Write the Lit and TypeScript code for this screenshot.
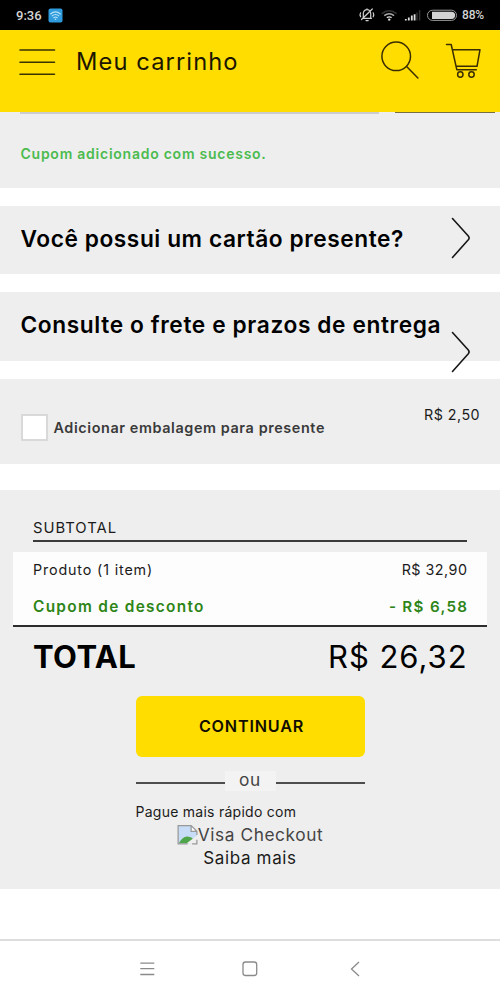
import { LitElement, html, css } from "lit";
import { customElement } from "lit/decorators.js";

const chevron = html`<svg class="chevron" width="22" height="42" viewBox="0 0 22 42" fill="none" stroke="#161616" stroke-width="1.6" stroke-linecap="round" stroke-linejoin="round"><path d="M2.5 1.5 18.300 19q1.600 1.900 0 3.800L2.500 40.500"/></svg>`;

@customElement("status-bar")
class StatusBar extends LitElement {
  static styles = css`
    :host { display: flex; align-items: center; flex: none; height: 30px; background: #000; color: #d4d4d4; font: 500 12px/30px Roboto, sans-serif; padding: 0 16px; }
    .time { font-size: 13px; padding-top: 1px; width: 32px; }
    .grow { flex: 1; }
    .pct { letter-spacing: -0.2px; }
    svg { display: block; flex: none; }
  `;
  render() {
    return html`
      <span class="time">9:36</span>
      <svg width="15" height="15" viewBox="0 0 15 15"><rect x=".5" y=".5" width="14" height="14" rx="2" fill="#2f9bdc"/><g fill="none" stroke="#b9e4fa" stroke-width="1.1" stroke-linecap="round"><path d="M2.6 6Q7.5 1.8 12.4 6M4.2 7.9q3.3-2.8 6.6 0M5.8 9.7q1.700-1.300 3.400 0"/></g><circle cx="7.5" cy="11.2" r=".8" fill="#b9e4fa"/></svg>
      <span class="grow"></span>
      <svg width="104" height="30" viewBox="358 0 104 30" fill="none">
        <g stroke="#cfcfcf" stroke-width="1.2" stroke-linecap="round"><path d="M362.5 18.300h9M363.300 18v-4.500a3.700 3.900 0 0 1 7.400 0V18M361.500 19.500 372.300 9M366 20.600h2.200M360.600 12.800q-1.100 1.800 0 4M373.200 12.800q1.100 1.800 0 4M367 9.300V8.800"/></g>
        <path d="M381.800 13.600q7.400-5.600 14.800 0" stroke="#333" stroke-width="1.6"/><path d="M384.300 15.600q4.900-3.700 9.800 0" stroke="#aaa" stroke-width="1.5"/><path d="M386.800 17.700q2.400-1.600 4.800 0" stroke="#ddd" stroke-width="1.4"/><circle cx="389.200" cy="19.600" r="1.2" fill="#ddd"/>
        <path d="M405.800 20.500v-1.500M408.800 20.500v-3M411.800 20.500v-5M414.600 20.500v-6.200" stroke="#ddd" stroke-width="1.8"/><path d="M417 20.500v-8M419.600 20.500V10" stroke="#333" stroke-width="1.4"/>
        <rect x="427.500" y="10.200" width="29" height="10.200" rx="5" stroke="#999"/><path d="M432 11.700h19.500a3.600 3.600 0 0 1 0 7.200H432z" fill="#d2d2d2"/>
      </svg>
      <span class="pct">88%</span>`;
  }
}

@customElement("app-root")
class AppRoot extends LitElement {
  static styles = css`
    :host { display: flex; flex-direction: column; height: 1000px; background: #fff; font-family: Inter, sans-serif; color: #1b1b1b; overflow: hidden; }
    svg { display: block; flex: none; }
    .top { display: flex; height: 82px; flex: none; background: #ffdd00; box-sizing: border-box; padding: 10px 19px 0; align-items: flex-start; }
    .title { flex: 1; font-size: 23.7px; line-height: 44px; padding-left: 20px; color: #1c1600; letter-spacing: 1.1px; }
    .search { margin-right: 26px; }
    .edge { display: flex; height: 2px; flex: none; padding-left: 20px; background: #eee; }
    .edge .field { width: 359px; background: #ccc; margin-right: 16px; }
    .edge .apply { width: 100px; background: #766d45; height: 1px; }
    .band { background: #eee; box-sizing: border-box; padding: 0 20.5px; flex: none; display: flex; }
    .coupon { height: 74px; font-size: 14px; font-weight: 600; color: #4bbb4f; line-height: 80px; letter-spacing: 0.75px; }
    .link { height: 68px; margin-top: 18px; font-size: 22.7px; font-weight: 600; color: #000; line-height: 65px; justify-content: space-between; padding-right: 28.5px; letter-spacing: 0.57px; }
    .link .chevron { margin-top: 10.5px; }
    .link.low { height: 69px; letter-spacing: 0.62px; }
    .link.low .chevron { margin-top: 39px; }
    .gift { height: 85px; margin-top: 18px; justify-content: space-between; }
    .check { display: flex; align-items: center; gap: 6px; font-size: 14.4px; font-weight: 600; color: #3a3a3a; padding-top: 12px; letter-spacing: 0.6px; }
    .box { width: 27px; height: 27px; box-sizing: border-box; border: 2px solid #d9d9d9; background: #fff; }
    .fee { font-size: 14.3px; line-height: 71px; letter-spacing: 0.45px; margin-right: -0.5px; }
    .summary { height: 399px; margin-top: 26px; padding: 0 13px; flex-direction: column; align-items: stretch; }
    .row { display: flex; justify-content: space-between; padding: 0 20px; font-size: 14.3px; }
    .row .amount { letter-spacing: 0.5px; margin-right: -0.5px; }
    .sub { font-size: 14.8px; line-height: 20px; letter-spacing: 0.97px; margin: 28px 20px 0; padding: 0 0 2px; border-bottom: 2px solid #3a3a3a; }
    .items { background: #fdfdfd; margin-top: 10px; height: 75px; border-bottom: 2px solid #2c2c2c; box-sizing: border-box; }
    .items .row { line-height: 36px; letter-spacing: 0.86px; }
    .items .off { font-size: 15.4px; line-height: 37px; letter-spacing: 1.3px; font-weight: 600; color: #2e8517; }
    .off .amount { font-size: 15.2px; letter-spacing: 1.3px; margin-right: -1.3px; }
    .total { font-size: 31px; line-height: 60px; color: #000; }
    .total b { font-weight: 700; letter-spacing: 0.4px; }
    .total .amount { letter-spacing: 0.96px; margin-right: -0.5px; }
    .pay { width: 229px; align-self: center; display: flex; flex-direction: column; align-items: center; }
    .go { width: 229px; height: 61px; border: 0; border-radius: 6px; background: #ffdd00; font: 600 16.2px/58px Inter, sans-serif; letter-spacing: 0.8px; color: #110d00; padding: 0 0 2px 3px; margin: 9px 0 0; }
    .or { display: flex; align-self: stretch; align-items: center; margin-top: 14px; font-size: 17.3px; color: #444; }
    .or i { flex: 1; height: 2px; background: #4d4d4d; margin-top: 4px; }
    .or span { width: 51px; text-align: center; background: #f3f3f3; line-height: 18px; height: 20px; letter-spacing: 0.6px; }
    .fast { align-self: flex-start; font-size: 14px; line-height: 22px; margin-top: 10px; letter-spacing: 0.26px; }
    .visa { display: flex; font-size: 17.3px; line-height: 23px; color: #444; letter-spacing: 0.58px; }
    .more { font-size: 17px; line-height: 24px; letter-spacing: 0.65px; }
    .nav { margin-top: auto; height: 59px; border-top: 2px solid #dedede; flex: none; display: flex; justify-content: center; }
  `;
  render() {
    return html`
      <status-bar></status-bar>
      <header class="top">
        <svg width="37" height="44" viewBox="0 0 37 44" stroke="#3a3300" stroke-width="1.6" stroke-linecap="round"><path d="M1 10h34.500M1 22.300h34.500M1 34.300h34.500"/></svg>
        <span class="title">Meu carrinho</span>
        <svg class="search" width="39" height="40" viewBox="0 0 39 40" fill="none" stroke="#3a2d00" stroke-width="1.500" stroke-linecap="round"><circle cx="16.200" cy="16.300" r="14.300"/><path d="M26.600 26.500 37.900 38"/></svg>
        <svg width="36" height="40" viewBox="445 40 36 40" fill="none" stroke="#3a2d00" stroke-width="1.500" stroke-linecap="round" stroke-linejoin="round"><path d="M446.500 44.500h4.700l5.600 25.200h19.500M452.500 49.700h27.500l-3 16.600h-20.700"/><circle cx="460.300" cy="74.500" r="2.700"/><circle cx="471.500" cy="74.500" r="2.700"/></svg>
      </header>
      <div class="edge"><span class="field"></span><span class="apply"></span></div>
      <section class="band coupon">Cupom adicionado com sucesso.</section>
      <section class="band link"><span>Você possui um cartão presente?</span>${chevron}</section>
      <section class="band link low"><span>Consulte o frete e prazos de entrega</span>${chevron}</section>
      <section class="band gift">
        <label class="check"><span class="box"></span>Adicionar embalagem para presente</label>
        <span class="fee">R$ 2,50</span>
      </section>
      <section class="band summary">
        <div class="sub">SUBTOTAL</div>
        <div class="items">
          <div class="row"><span>Produto (1 item)</span><span class="amount">R$ 32,90</span></div>
          <div class="row off"><span>Cupom de desconto</span><span class="amount">- R$ 6,58</span></div>
        </div>
        <div class="row total"><b>TOTAL</b><span class="amount">R$ 26,32</span></div>
        <div class="pay">
          <button class="go">CONTINUAR</button>
          <div class="or"><i></i><span>ou</span><i></i></div>
          <span class="fast">Pague mais rápido com</span>
          <div class="visa">
            <svg width="21" height="23" viewBox="0 0 21 24"><path d="M.7 2.700h13.600l6 6v13H.7z" fill="#c7dcf6"/><path d="M1.500 21q3-6 8-7 5 0 7 3l-5 4z" fill="#4fa64a"/><path d="M20.300 13v8.700H9z" fill="#eee"/><path d="M14.300 2.700v6h6z" fill="#fff"/><path d="M20.300 12.500V8.700l-6-6H.7v19h10M14.300 2.700v6h6M20.300 17.500v4.200h-5" fill="none" stroke="#999" stroke-width="1.300"/></svg>
            <span>Visa Checkout</span>
          </div>
          <span class="more">Saiba mais</span>
        </div>
      </section>
      <nav class="nav"><svg width="300" height="57" viewBox="100 942 300 57" fill="none" stroke="#8a8a8a" stroke-width="1.300"><path d="M140.300 964.200h14M140.300 969.700h14M140.300 975.500h14M359 963l-7.500 7 7.500 7"/><rect x="243" y="963" width="13.700" height="13.500" rx="2.500"/></svg></nav>
    `;
  }
}
